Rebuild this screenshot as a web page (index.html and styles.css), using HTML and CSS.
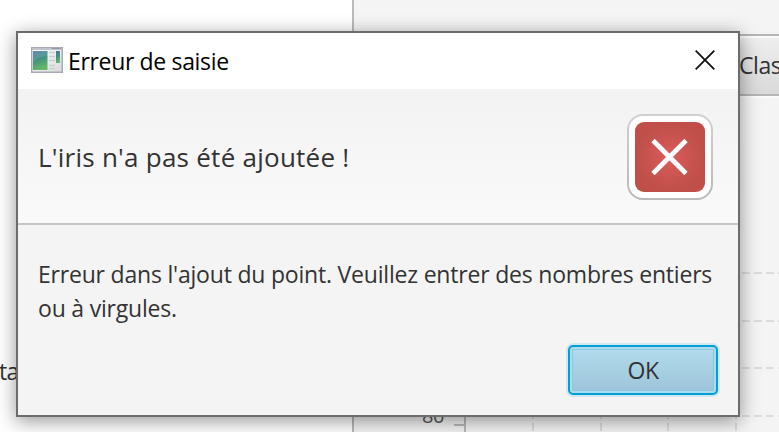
FILE: index.html
```
<!DOCTYPE html>
<html lang="fr">
<head>
<meta charset="utf-8">
<title>Erreur de saisie</title>
<link rel="stylesheet" href="styles.css">
</head>
<body>
<div class="app">
  <aside class="side"><span class="side-label">ta</span></aside>
  <main class="content">
    <div class="toolbar"><span class="toolbar-label">Clas</span></div>
    <svg class="chart" viewBox="354 96 425 336" width="425" height="336">
      <g class="grid">
        <path d="M467 273H779M467 321H779M467 368H779M467 416H779" stroke-dashoffset="1"/>
        <path d="M533 432V250M601 432V250M668 432V250M736 432V250" stroke-dashoffset="-1"/>
      </g>
      <path class="axis" d="M465 250V432M454 425H465"/>
      <text class="tick" x="422" y="423">80</text>
    </svg>
  </main>
</div>
<section class="dialog" role="dialog">
  <header class="titlebar">
    <svg class="app-icon" width="32" height="26" viewBox="0 0 32 26">
      <defs>
        <linearGradient id="frame" x1="0" y1="0" x2="1" y2="1"><stop offset="0" stop-color="#fff"/><stop offset="1" stop-color="#d9dadd"/></linearGradient>
        <linearGradient id="pane" x1="0" y1="0" x2=".3" y2="1"><stop offset="0" stop-color="#4773a0"/><stop offset=".5" stop-color="#429083"/><stop offset="1" stop-color="#63b865"/></linearGradient>
      </defs>
      <rect x=".75" y=".75" width="30.500" height="24.500" fill="url(#frame)" stroke="#a6aab2" stroke-width="1.500"/>
      <path d="M1 2H31" stroke="#bfc3cb" stroke-width="2"/>
      <path d="M21 1.500H30" stroke="#939ba8"/>
      <rect x="2" y="4" width="14.500" height="19" fill="url(#pane)"/>
      <path d="M2 15Q7 9 16.500 9V4H2Z" fill="#fff" opacity=".13"/>
      <path d="M18 5.500H24M18 9.500H24M18 13.500H24M18 18.500H24M18 21.500H24" stroke="#cbcdd0" stroke-width="1.500"/>
      <rect x="25" y="4" width="4" height="12" fill="url(#pane)"/>
    </svg>
    <h1 class="title">Erreur de saisie</h1>
    <svg class="close" width="20" height="20" viewBox="0 0 20 20"><path d="M.7.7 19.300 19.300M19.300.7.7 19.300"/></svg>
  </header>
  <div class="header">
    <h2 class="headline">L'iris n'a pas été ajoutée !</h2>
    <svg class="error" width="86" height="86" viewBox="0 0 86 86">
      <defs>
        <linearGradient id="rim" x1="0" y1="0" x2="0" y2="1"><stop offset="0" stop-color="#d0d0d0"/><stop offset="1" stop-color="#b9b9b9"/></linearGradient>
        <radialGradient id="red"><stop offset="0" stop-color="#da5b5b"/><stop offset="1" stop-color="#bf4f48"/></radialGradient>
      </defs>
      <rect x="1" y="1" width="84" height="84" rx="15" fill="#fff" stroke="url(#rim)" stroke-width="2"/>
      <rect x="8" y="8" width="70" height="70" rx="9" fill="url(#red)"/>
      <path d="M26 26.500 59 59.500M59 26.500 26 59.500" stroke="#fff" stroke-width="4.700"/>
    </svg>
  </div>
  <div class="body">
    <p class="message">Erreur dans l'ajout du point. Veuillez entrer des nombres entiers<br>ou à virgules.</p>
    <button class="ok" type="button">OK</button>
  </div>
</section>
</body>
</html>
```
FILE: styles.css
```
* { box-sizing: border-box; }
body {
  margin: 0;
  width: 779px;
  height: 432px;
  overflow: hidden;
  position: relative;
  font-family: "Open Sans", "Noto Sans", sans-serif;
  font-size: 23px;
  color: #333;
}
.app { display: flex; height: 432px; }
.side {
  width: 354px;
  border-right: 2px solid #bababa;
  background: #fff;
  padding-top: 355px;
  line-height: 32px;
}
.side-label { margin-left: -1px; letter-spacing: -0.8px; }
.content { flex: 1; background: #f4f4f4; padding-top: 34px; overflow: hidden; }
.toolbar {
  height: 62px;
  padding-left: 385px;
  background: linear-gradient(#efefef, #d9d9d9);
  border: solid #b5b5b5;
  border-width: 2px 0;
  box-shadow: inset 0 2px #fafafa, 0 2px #fafafa;
  line-height: 58px;
  white-space: nowrap;
}
.toolbar-label { letter-spacing: -0.4px; }
.chart { display: block; }
.grid path { stroke: #dcdcdc; stroke-width: 2; stroke-dasharray: 8 4; fill: none; }
.axis { stroke: #bababa; stroke-width: 2; fill: none; }
.tick { font-size: 20px; fill: #555; letter-spacing: -0.5px; }
.dialog {
  position: absolute;
  left: 16px;
  top: 31px;
  width: 724px;
  height: 386px;
  border: 2px solid #6c6c6c;
  background: #f4f4f4;
  box-shadow: 0 4px 18px rgba(0, 0, 0, 0.42);
}
.titlebar {
  height: 56px;
  padding: 0 23px 0 13px;
  display: flex;
  align-items: center;
  background: #fff;
}
.app-icon { margin-bottom: 2px; }
.title {
  flex: 1;
  margin: 0 0 0 5px;
  font-size: 23px;
  font-weight: 400;
  letter-spacing: -0.34px;
  color: #000;
}
.close { margin-bottom: 2px; }
.close path { stroke: #111; stroke-width: 1.800; fill: none; }
.header {
  height: 136px;
  display: flex;
  align-items: center;
  justify-content: space-between;
  padding: 2px 25px 0 20px;
  border-bottom: 2px solid #c5c5c5;
  background: linear-gradient(#f2f2f2, #fafafa);
}
.headline { margin: 0; font-size: 26px; font-weight: 400; letter-spacing: 0.25px; }
.body {
  height: 190px;
  display: flex;
  flex-direction: column;
  justify-content: space-between;
  padding: 32px 20px 20px;
}
.message { margin: 0; line-height: 34px; white-space: nowrap; letter-spacing: -0.2px; }
.ok {
  align-self: flex-end;
  width: 150px;
  height: 50px;
  padding: 0;
  border: 2px solid #039ed3;
  border-radius: 5px;
  background: linear-gradient(#b3dcee, #9cc3d7);
  box-shadow: 0 0 0 2px #d2e8f0, inset 0 0 0 2px #a9dcef, inset 0 0 0 3px #91c6dc;
  font: inherit;
  color: #333;
  letter-spacing: -0.6px;
}
```
